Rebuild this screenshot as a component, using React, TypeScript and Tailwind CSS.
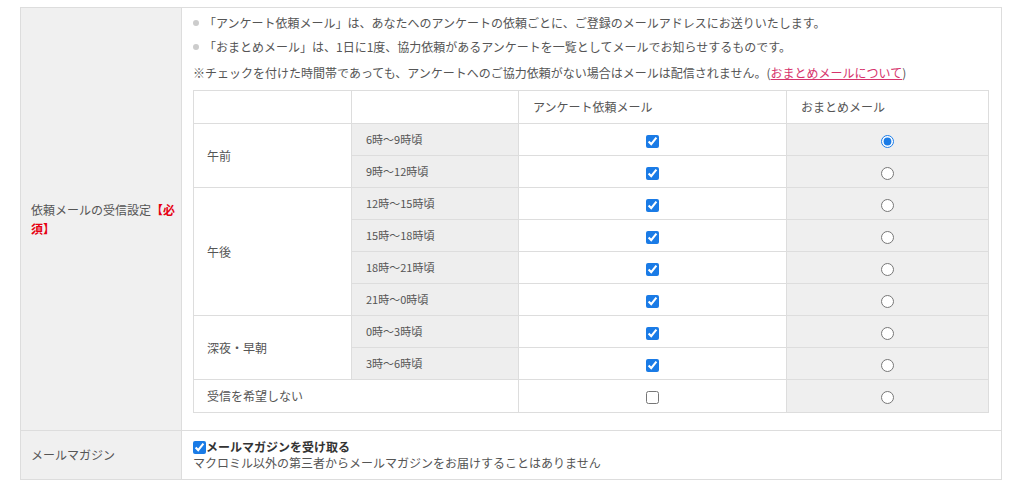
import { useState } from "react";

const slots = [
  { group: "午前", span: 2, time: "6時〜9時頃" },
  { group: "", span: 0, time: "9時〜12時頃" },
  { group: "午後", span: 4, time: "12時〜15時頃" },
  { group: "", span: 0, time: "15時〜18時頃" },
  { group: "", span: 0, time: "18時〜21時頃" },
  { group: "", span: 0, time: "21時〜0時頃" },
  { group: "深夜・早朝", span: 2, time: "0時〜3時頃" },
  { group: "", span: 0, time: "3時〜6時頃" },
];

export default function App() {
  const [checked, setChecked] = useState<boolean[]>([true, true, true, true, true, true, true, true, false]);
  const [digest, setDigest] = useState(0);
  const [magazine, setMagazine] = useState(true);

  const toggle = (i: number) =>
    setChecked((prev) => prev.map((v, idx) => (idx === i ? !v : v)));

  return (
    <div className="bg-white pt-[7px] pl-[20px] font-['Noto_Sans_CJK_JP','Noto_Sans',sans-serif] text-[#555]">
      <table className="w-[981px] table-fixed border-collapse border border-[#dddddd] text-[12px]">
        <colgroup>
          <col className="w-[161px]" />
          <col className="w-[820px]" />
        </colgroup>
        <tbody>
          {/* 依頼メールの受信設定 */}
          <tr>
            <th className="bg-[#f0f0f0] pl-[10px] pr-[2px] text-left align-middle font-normal leading-[19px] border-b border-r border-[#dddddd]">
              依頼メールの受信設定<span className="font-bold text-[#e60012]">【必</span>
              <br />
              <span className="font-bold text-[#e60012]">須】</span>
            </th>
            <td className="pt-[3px] pl-[11px] pr-[12px] pb-[17px] align-top border-b border-[#dddddd]">
              <ul className="leading-[24px]">
                <li className="flex items-center">
                  <span className="mr-[5px] h-[6px] w-[6px] rounded-full bg-[#cccccc]" />
                  「アンケート依頼メール」は、あなたへのアンケートの依頼ごとに、ご登録のメールアドレスにお送りいたします。
                </li>
                <li className="flex items-center">
                  <span className="mr-[5px] h-[6px] w-[6px] rounded-full bg-[#cccccc]" />
                  「おまとめメール」は、1日に1度、協力依頼があるアンケートを一覧としてメールでお知らせするものです。
                </li>
              </ul>
              <p className="mt-[2px] leading-[24px]">
                ※チェックを付けた時間帯であっても、アンケートへのご協力依頼がない場合はメールは配信されません。(
                <a href="#" className="text-[#d6336c] underline">
                  おまとめメールについて
                </a>
                )
              </p>

              <table className="mt-[5px] w-[795px] table-fixed border-collapse border border-[#dddddd]">
                <colgroup>
                  <col className="w-[158px]" />
                  <col className="w-[167px]" />
                  <col className="w-[268px]" />
                  <col className="w-[202px]" />
                </colgroup>
                <thead>
                  <tr className="h-[33px]">
                    <th className="border border-[#dddddd] bg-white" />
                    <th className="border border-[#dddddd] bg-white" />
                    <th className="border border-[#dddddd] bg-white pl-[14px] text-left font-normal">
                      アンケート依頼メール
                    </th>
                    <th className="border border-[#dddddd] bg-white pl-[14px] text-left font-normal">
                      おまとめメール
                    </th>
                  </tr>
                </thead>
                <tbody>
                  {slots.map((s, i) => (
                    <tr key={s.time} className="h-[32px]">
                      {s.span > 0 && (
                        <td
                          rowSpan={s.span}
                          className="border border-[#dddddd] bg-white pl-[13px]"
                        >
                          {s.group}
                        </td>
                      )}
                      <td className="border border-[#dddddd] bg-[#eeeeee] pl-[14px] text-[11px]">
                        {s.time}
                      </td>
                      <td className="border border-[#dddddd] bg-white text-center">
                        <input
                          type="checkbox"
                          checked={checked[i]}
                          onChange={() => toggle(i)}
                          className="m-0 h-[13px] w-[13px] align-middle accent-[#1a7be6]"
                        />
                      </td>
                      <td className="border border-[#dddddd] bg-[#efefef] text-center">
                        <input
                          type="radio"
                          name="digest"
                          checked={digest === i}
                          onChange={() => setDigest(i)}
                          className="m-0 h-[13px] w-[13px] align-middle accent-[#1a7be6]"
                        />
                      </td>
                    </tr>
                  ))}
                  <tr className="h-[33px]">
                    <td colSpan={2} className="border border-[#dddddd] bg-white pl-[13px]">
                      受信を希望しない
                    </td>
                    <td className="border border-[#dddddd] bg-white text-center">
                      <input
                        type="checkbox"
                        checked={checked[8]}
                        onChange={() => toggle(8)}
                        className="m-0 h-[13px] w-[13px] align-middle accent-[#1a7be6]"
                      />
                    </td>
                    <td className="border border-[#dddddd] bg-[#efefef] text-center">
                      <input
                        type="radio"
                        name="digest"
                        checked={digest === 8}
                        onChange={() => setDigest(8)}
                        className="m-0 h-[13px] w-[13px] align-middle accent-[#1a7be6]"
                      />
                    </td>
                  </tr>
                </tbody>
              </table>
            </td>
          </tr>

          {/* メールマガジン */}
          <tr className="h-[49px]">
            <th className="bg-[#f0f0f0] pl-[10px] text-left align-middle font-normal border-r border-[#dddddd]">
              メールマガジン
            </th>
            <td className="pl-[11px] align-middle leading-[16px]">
              <label className="flex items-center font-bold text-[#333]">
                <input
                  type="checkbox"
                  checked={magazine}
                  onChange={() => setMagazine(!magazine)}
                  className="m-0 h-[13px] w-[13px] accent-[#1a7be6]"
                />
                メールマガジンを受け取る
              </label>
              <p>マクロミル以外の第三者からメールマガジンをお届けすることはありません</p>
            </td>
          </tr>
        </tbody>
      </table>
    </div>
  );
}
